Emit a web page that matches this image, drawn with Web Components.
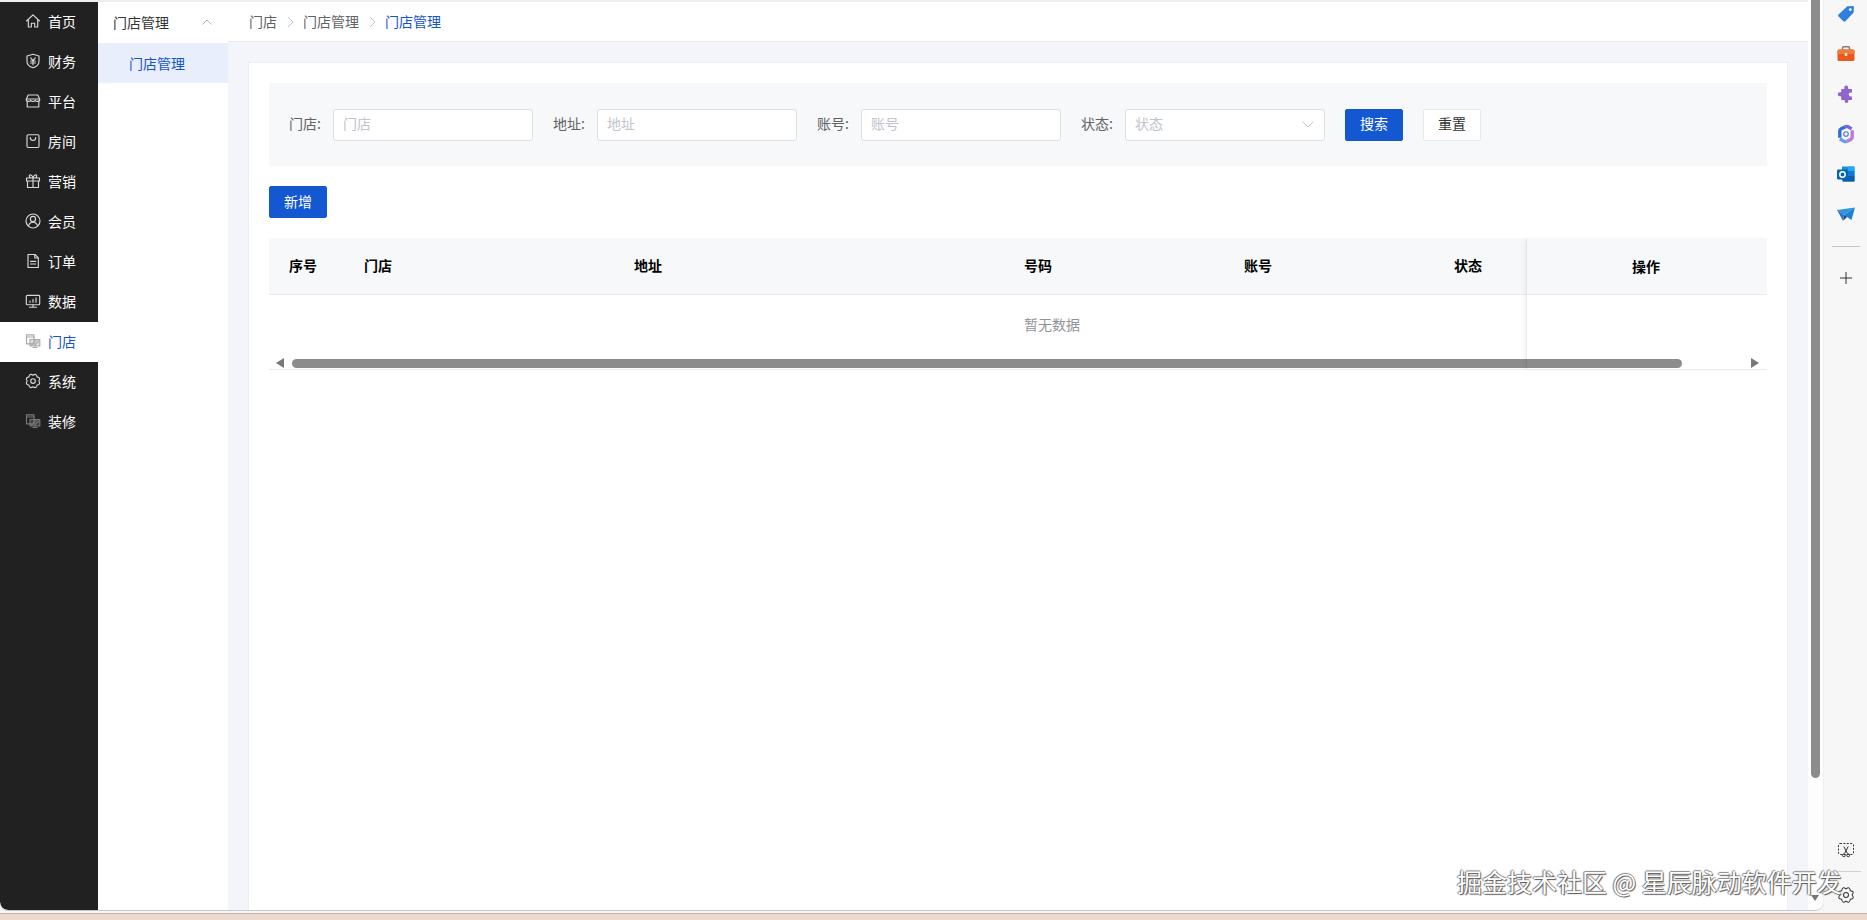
<!DOCTYPE html>
<html lang="zh-CN">
<head>
<meta charset="utf-8">
<title>门店管理</title>
<style>
  html, body { margin: 0; height: 920px; overflow: hidden; }
  body {
    background: #ecd9cc;
    font-family: "Noto Sans CJK SC", "Noto Sans", sans-serif;
    font-size: 14px;
  }
</style>
</head>
<body>
<browser-frame>
  <admin-app>
    <nav-rail slot="nav">
      <nav-item icon="home">首页</nav-item>
      <nav-item icon="shield">财务</nav-item>
      <nav-item icon="store">平台</nav-item>
      <nav-item icon="bag">房间</nav-item>
      <nav-item icon="gift">营销</nav-item>
      <nav-item icon="user">会员</nav-item>
      <nav-item icon="doc">订单</nav-item>
      <nav-item icon="chart">数据</nav-item>
      <nav-item icon="screens" active>门店</nav-item>
      <nav-item icon="gear">系统</nav-item>
      <nav-item icon="screens" dim>装修</nav-item>
    </nav-rail>
    <sub-menu slot="sub" heading="门店管理">
      <sub-item active>门店管理</sub-item>
    </sub-menu>
    <bread-crumb slot="crumb" items="门店,门店管理,门店管理"></bread-crumb>
    <page-card slot="page">
      <search-bar>
        <search-field label="门店" hint="门店"></search-field>
        <search-field label="地址" hint="地址"></search-field>
        <search-field label="账号" hint="账号"></search-field>
        <search-field label="状态" hint="状态" select></search-field>
        <ui-button primary>搜索</ui-button>
        <ui-button class="reset">重置</ui-button>
      </search-bar>
      <ui-button primary class="add">新增</ui-button>
      <data-table></data-table>
    </page-card>
  </admin-app>
  <ext-rail></ext-rail>
  <water-mark>掘金技术社区 @ 星辰脉动软件开发</water-mark>
</browser-frame>

<script>
// scalloped outline used by both gear icons
function gearPath(lobes, outer, inner) {
  let d = '';
  for (let i = 0; i < lobes; i++) {
    const a = (i / lobes) * Math.PI * 2;
    const b = ((i + 0.5) / lobes) * Math.PI * 2;
    const c = ((i + 1) / lobes) * Math.PI * 2;
    const pt = (ang, r) => `${(8 + Math.cos(ang) * r).toFixed(2)} ${(8 + Math.sin(ang) * r).toFixed(2)}`;
    if (i === 0) d += `M${pt(a, inner)}`;
    d += `Q${pt(b, outer * 1.18)} ${pt(c, inner)}`;
  }
  return d + 'z';
}

const ICONS = {
  home: '<path d="M1.500 8 8 1.800 14.500 8M3.300 6.600V14h3V10.200h3.400V14h3V6.600"/>',
  shield: '<path d="M8 1.300 14 3v5.200c0 3.400-2.600 5.500-6 6.500-3.400-1-6-3.100-6-6.500V3z"/><path d="M5.800 4.800 8 7.600l2.200-2.800M5.600 8h4.800M5.600 10h4.800M8 7.600V12" stroke-width="1.100"/>',
  store: '<path d="M3.200 2h9.600l2 4.500c0 1-1 1.900-2.300 1.900-1 0-1.900-.5-2.250-1.200C9.900 7.900 9 8.400 8 8.400s-1.900-.5-2.250-1.200C5.400 7.900 4.500 8.400 3.500 8.400c-1.300 0-2.300-.9-2.300-1.900z"/><path d="M2.200 8v6h11.600V8M2 6h12"/>',
  bag: '<rect x="2" y="1.700" width="12" height="12.800" rx="1.200"/><path d="M5.300 4.500c0 4 5.400 4 5.400 0"/>',
  gift: '<path d="M1.500 5h13v3h-13zM2.500 8v6.500h11V8M8 5v9.500M8 5C6.500 5 4.300 4.500 4.300 2.900 4.300 1.200 7.200 1.500 8 5c.8-3.500 3.700-3.800 3.700-2.100C11.700 4.500 9.500 5 8 5z"/>',
  user: '<circle cx="8" cy="8" r="7"/><circle cx="8" cy="6" r="2.600"/><path d="M3.500 13.200c.5-2.600 2.300-4 4.500-4s4 1.400 4.500 4"/>',
  doc: '<path d="M3 1.500h7l3.300 3.400v9.600H3z"/><path d="M9.800 1.500v3.500h3.500M5.500 8.300h5.200M5.500 11h5.200"/>',
  chart: '<rect x="1.300" y="2.300" width="13.400" height="9.400" rx="1"/><path d="M8 11.700v2.200M4.500 14.200h7M5 9.300V8M8 9.300V6.300M11 9.300V4.800"/>',
  screens: '<rect x="1.500" y="1.800" width="7.500" height="9" fill="none"/><path d="M1.500 4h7.500"/><rect x="5" y="6.500" width="9.800" height="6.500" fill="#888" fill-opacity=".25"/><path d="M6.500 12 11 7.500M9.500 12.500l4-4.500M8 14.500h4"/>',
  gear: `<path d="${gearPath(8, 7.4, 5.800)}"/><circle cx="8" cy="8" r="2.300"/>`
};

function svgIcon(name, size) {
  return `<svg width="${size}" height="${size}" viewBox="0 0 16 16" fill="none" stroke="currentColor" stroke-width="1.150" stroke-linejoin="round" stroke-linecap="round">${ICONS[name]}</svg>`;
}

class BrowserFrame extends HTMLElement {
  constructor() {
    super();
    this.attachShadow({ mode: 'open' });
    this.shadowRoot.innerHTML = `
      <style>
        :host { display: flex; position: relative; height: 914px; background: #f7f7f7; border-bottom: 1px solid #bdb6b1; box-sizing: border-box; }
      </style>
      <slot></slot>`;
  }
}

class AdminApp extends HTMLElement {
  constructor() {
    super();
    this.attachShadow({ mode: 'open' });
    this.shadowRoot.innerHTML = `
      <style>
        :host { display: flex; width: 1823px; height: 910px; flex: none; background: #fff; border-radius: 0 0 8px 8px; overflow: hidden; box-shadow: 0 1px 0 #c8c8c8; }
        .left { flex: 1; min-width: 0; display: flex; padding-top: 2px; background: #eeeeee; }
        .main { flex: 1; min-width: 0; display: flex; flex-direction: column; background: #f3f5fa; }
        .vscroll { width: 15px; flex: none; background: #fdfdfd; padding-left: 3px; box-sizing: border-box; position: relative; }
        .thumb { width: 9px; height: 778px; background: #8c8c8c; border-radius: 0 0 5px 5px; }
        .down { position: absolute; left: 3px; bottom: 9px; width: 0; height: 0; border-left: 4.500px solid transparent; border-right: 4.500px solid transparent; border-top: 6px solid #777; }
      </style>
      <div class="left">
        <slot name="nav"></slot>
        <slot name="sub"></slot>
        <div class="main">
          <slot name="crumb"></slot>
          <slot name="page"></slot>
        </div>
      </div>
      <div class="vscroll"><div class="thumb"></div><div class="down"></div></div>`;
  }
}

class NavRail extends HTMLElement {
  constructor() {
    super();
    this.attachShadow({ mode: 'open' });
    this.shadowRoot.innerHTML = `
      <style>
        :host { display: block; width: 98px; flex: none; background: #212121; border-radius: 0 0 0 8px; }
      </style>
      <slot></slot>`;
  }
}

class NavItem extends HTMLElement {
  constructor() {
    super();
    this.attachShadow({ mode: 'open' });
  }

  connectedCallback() {
    this.shadowRoot.innerHTML = `
      <style>
        :host { display: flex; align-items: center; gap: 7px; height: 40px; padding: 0 0 2px 25px; box-sizing: border-box; color: #fff; font-size: 14px; }
        :host([active]) { background: #fff; color: #1456c8; }
        svg { display: block; color: #d8d8d8; }
        :host([active]) svg { color: #a9a9a9; }
        :host([dim]) svg { color: #7a7a7a; }
      </style>
      ${svgIcon(this.getAttribute('icon'), 16)}
      <slot></slot>`;
  }
}

class SubMenu extends HTMLElement {
  constructor() {
    super();
    this.attachShadow({ mode: 'open' });
  }

  connectedCallback() {
    this.shadowRoot.innerHTML = `
      <style>
        :host { display: block; width: 130px; flex: none; background: #fff; color: #333; }
        .title { display: flex; align-items: center; justify-content: space-between; height: 41px; padding: 0 15px 2px; box-sizing: border-box; }
        svg { display: block; margin-right: 1px; }
      </style>
      <div class="title">
        <span>${this.getAttribute('heading')}</span>
        <svg width="10" height="6" viewBox="0 0 10 6" fill="none" stroke="#b5b5b5" stroke-width="1"><path d="M.5 5.500 5 1l4.500 4.500"/></svg>
      </div>
      <slot></slot>`;
  }
}

class SubItem extends HTMLElement {
  constructor() {
    super();
    this.attachShadow({ mode: 'open' });
    this.shadowRoot.innerHTML = `
      <style>
        :host { display: flex; align-items: center; height: 40px; padding-left: 31px; }
        :host([active]) { background: #e8eefb; color: #1456c8; }
      </style>
      <slot></slot>`;
  }
}

class BreadCrumb extends HTMLElement {
  constructor() {
    super();
    this.attachShadow({ mode: 'open' });
  }

  connectedCallback() {
    const items = this.getAttribute('items').split(',');
    const chevron = '<svg class="sep" width="7" height="12" viewBox="0 0 7 12" fill="none" stroke="#c0c4cc" stroke-width="1"><path d="M1 1l5 5-5 5"/></svg>';
    this.shadowRoot.innerHTML = `
      <style>
        :host { display: flex; align-items: center; height: 40px; padding: 0 0 2px 21px; background: #fff; border-bottom: 1px solid #e8eaef; box-sizing: border-box; color: #606266; flex: none; }
        .sep { margin: 2px 9.500px 0; display: block; }
        span:last-child { color: #1456c8; }
      </style>
      ${items.map(t => `<span>${t}</span>`).join(chevron)}`;
  }
}

class PageCard extends HTMLElement {
  constructor() {
    super();
    this.attachShadow({ mode: 'open' });
    this.shadowRoot.innerHTML = `
      <style>
        :host { display: flex; flex-direction: column; flex: 1; margin: 20px 20px 0; padding: 20px 20px 0; background: #fff; border: 1px solid #eceef3; border-bottom: 0; box-sizing: border-box; }
        ::slotted(.add) { align-self: flex-start; margin: 20px 0; }
      </style>
      <slot></slot>`;
  }
}

class SearchBar extends HTMLElement {
  constructor() {
    super();
    this.attachShadow({ mode: 'open' });
    this.shadowRoot.innerHTML = `
      <style>
        :host { display: flex; align-items: center; gap: 21px; height: 83px; padding-left: 20px; background: #f7f8fa; }
        ::slotted(.reset) { margin-left: -1px; }
      </style>
      <slot></slot>`;
  }
}

class SearchField extends HTMLElement {
  constructor() {
    super();
    this.attachShadow({ mode: 'open' });
  }

  connectedCallback() {
    const arrow = this.hasAttribute('select')
      ? '<svg width="12" height="7" viewBox="0 0 12 7" fill="none" stroke="#c0c4cc" stroke-width="1"><path d="M.8.8 6 6l5.200-5.200"/></svg>'
      : '';
    this.shadowRoot.innerHTML = `
      <style>
        :host { display: flex; align-items: center; margin-right: -1px; }
        label { width: 33px; margin-right: 11px; color: #606266; white-space: nowrap; padding-bottom: 4px; }
        .box { display: flex; align-items: center; justify-content: space-between; width: 200px; height: 32px; padding: 0 10px 0 9px; box-sizing: border-box; background: #fff; border: 1px solid #dcdfe6; border-radius: 3px; color: #c0c4cc; font-size: 14px; }
        .box span { padding-bottom: 4px; }
      </style>
      <label>${this.getAttribute('label')}:</label>
      <div class="box"><span>${this.getAttribute('hint')}</span>${arrow}</div>`;
  }
}

class UiButton extends HTMLElement {
  constructor() {
    super();
    this.attachShadow({ mode: 'open' });
    this.shadowRoot.innerHTML = `
      <style>
        :host { display: flex; align-items: center; justify-content: center; width: 58px; height: 32px; padding-bottom: 3px; box-sizing: border-box; background: #fff; border: 1px solid #e4e7ed; border-radius: 2px; color: #333; font-size: 14px; }
        :host([primary]) { background: #1358d0; border-color: #1358d0; color: #fff; }
      </style>
      <slot></slot>`;
  }
}

class DataTable extends HTMLElement {
  constructor() {
    super();
    this.attachShadow({ mode: 'open' });
    const cols = [['序号', 75], ['门店', 270], ['地址', 390], ['号码', 220], ['账号', 210], ['状态', 73]];
    this.shadowRoot.innerHTML = `
      <style>
        :host { display: block; position: relative; height: 132px; border-bottom: 1px solid #e9ebf0; box-sizing: border-box; }
        .head { display: flex; height: 57px; padding-bottom: 2px; background: #f7f8fa; border-bottom: 1px solid #e9ebf0; box-sizing: border-box; color: #000; font-weight: 700; }
        .head div { display: flex; align-items: center; padding-left: 20px; box-sizing: border-box; flex: none; }
        .empty { height: 63px; line-height: 58px; padding-left: 755px; color: #909399; font-size: 14px; box-sizing: border-box; }
        .scroll { display: flex; align-items: center; height: 10px; }
        .left { width: 0; height: 0; margin-left: 7px; border-top: 5px solid transparent; border-bottom: 5px solid transparent; border-right: 8px solid #777; }
        .thumb { width: 1390px; height: 9px; margin-left: 8px; background: #8c8c8c; border-radius: 5px; }
        .right { width: 0; height: 0; margin-left: auto; margin-right: 8px; border-top: 5px solid transparent; border-bottom: 5px solid transparent; border-left: 8px solid #777; }
        .fixed { position: absolute; left: 1257px; top: 0; bottom: 0; width: 241px; padding-right: 2px; box-sizing: border-box; border-left: 1px solid rgba(0,0,0,.07); box-shadow: -3px 0 5px -2px rgba(0,0,0,.06); }
        .fixed div { display: flex; align-items: center; justify-content: center; height: 55px; color: #000; font-weight: 700; }
      </style>
      <div class="head">${cols.map(([t, w]) => `<div style="width:${w}px">${t}</div>`).join('')}</div>
      <div class="empty">暂无数据</div>
      <div class="scroll"><div class="left"></div><div class="thumb"></div><div class="right"></div></div>
      <div class="fixed"><div>操作</div></div>`;
  }
}

class ExtRail extends HTMLElement {
  constructor() {
    super();
    this.attachShadow({ mode: 'open' });
    this.shadowRoot.innerHTML = `
      <style>
        :host { display: flex; flex-direction: column; align-items: center; flex: 1; position: relative; height: 913px; border-left: 1px solid #efefef; box-sizing: border-box; overflow: hidden; }
        .app { display: flex; align-items: center; justify-content: center; height: 40px; flex: none; }
        .app:first-of-type { margin-top: -6px; }
        svg { display: block; flex: none; }
        hr { width: 28px; height: 1px; margin: 12px 0 0; border: 0; background: #c9c9c9; flex: none; }
        .plus { margin-top: 24px; }
        .spacer { flex: 1; }
        .cut { margin-bottom: 13px; }
        .line { width: 30px; height: 1px; background: #d2d2d2; margin-bottom: 14px; flex: none; }
        .gear { margin-bottom: 9px; margin-left: 1px; }
      </style>
      <div class="app"><svg width="20" height="20" viewBox="0 0 20 20"><path d="M2.500 10.500 10.800 2.700c.4-.4.800-.5 1.300-.5l4.600-.3c.7 0 1.200.5 1.200 1.200l-.2 4.700c0 .5-.2.900-.5 1.200L9.400 17.300c-.6.600-1.500.6-2 0l-4.900-4.900c-.5-.5-.5-1.400 0-1.900z" fill="#2f7fdf"/><circle cx="14.300" cy="5.600" r="1.400" fill="#fff"/></svg></div>
      <div class="app"><svg width="20" height="20" viewBox="0 0 20 20"><path d="M6.500 6V3.800c0-.6.400-1 1-1h5c.6 0 1 .4 1 1V6" fill="none" stroke="#8a7a72" stroke-width="1.500"/><rect x="1.500" y="5.500" width="17" height="11.500" rx="1.500" fill="#e9581f"/><rect x="1.500" y="5.500" width="17" height="4.500" rx="1.500" fill="#f07a3a"/><rect x="8.700" y="9" width="2.600" height="3" rx=".6" fill="#fde6d5"/></svg></div>
      <div class="app"><svg width="20" height="20" viewBox="0 0 20 20"><path d="M8.300 5V3.300a1.900 1.900 0 0 1 3.800 0V5h3.100c.5 0 .8.300.8.800v2.600h-1.300a2 2 0 0 0 0 4H16v2.800c0 .5-.3.800-.8.800h-2.900v1.200a1.800 1.800 0 0 1-3.600 0V16H6c-.5 0-.8-.3-.8-.8v-2.900H3.700a2 2 0 0 1 0-4h1.500V5.800c0-.5.300-.8.800-.8z" fill="#9163cc"/></svg></div>
      <div class="app"><svg width="20" height="20" viewBox="0 0 20 20" fill="none" stroke-width="3.400"><path d="M3.800 13.800V6.800c0-1 .5-1.700 1.400-2.100L9.500 2.700" stroke="#2f6fd6"/><path d="M9.500 2.700c1-.4 2-.3 2.800.2l3.300 2" stroke="#7a63d6"/><path d="M16.200 6.200v7c0 1-.5 1.700-1.300 2.200l-4.200 2" stroke="#b77be0"/><path d="M10.700 17.400c-1 .4-1.900.3-2.800-.2l-4-2.400" stroke="#6a9cee"/><circle cx="10" cy="10" r="2.300" stroke="#4f77d8" stroke-width="1.100"/></svg></div>
      <div class="app"><svg width="20" height="20" viewBox="0 0 20 20"><path d="M6 2.500h11.500c.5 0 1 .5 1 1v13c0 .5-.5 1-1 1H7c-.5 0-1-.5-1-1z" fill="#1490df"/><path d="M12 2.500h6.500V7H12z" fill="#28a8ea"/><path d="M12 7h6.500v5H12z" fill="#0f78d4"/><path d="M7 12h11.500v5.500H7z" fill="#0a5ea8"/><rect x="1" y="5.500" width="11" height="10" rx="1.200" fill="#0364b8"/><circle cx="6.500" cy="10.500" r="2.700" fill="none" stroke="#fff" stroke-width="1.500"/></svg></div>
      <div class="app"><svg width="20" height="20" viewBox="0 0 20 20"><path d="M1 6 19 3.500 8 11z" fill="#2f95e0"/><path d="M19 3.500 15.500 16 8 11z" fill="#1f7fd0"/><path d="M8 11l-.8 5.800L11 13z" fill="#1d3f7c"/><path d="M1 6l7 5-1 5.800z" fill="#2d6fc0"/></svg></div>
      <hr>
      <svg class="plus" width="14" height="14" viewBox="0 0 14 14" stroke="#333" stroke-width="1"><path d="M7 1v12M1 7h12"/></svg>
      <div class="spacer"></div>
      <svg class="cut" width="16" height="16" viewBox="0 0 16 16" fill="none" stroke="#333" stroke-width="1"><rect x=".5" y="1.500" width="15" height="11" rx="1.500" stroke-dasharray="2 1.400"/><path d="M5.800 4.500 9.400 11.500M10.200 4.500 6.600 11.500"/><circle cx="5.800" cy="13.300" r="1.400"/><circle cx="10.200" cy="13.300" r="1.400"/></svg>
      <div class="line"></div>
      <svg class="gear" width="18" height="18" viewBox="0 0 16 16" fill="none" stroke="#333" stroke-width=".9"><path d="${gearPath(8, 7.400, 5.400)}"/><circle cx="8" cy="8" r="2.200"/></svg>`;
  }
}

class WaterMark extends HTMLElement {
  constructor() {
    super();
    this.attachShadow({ mode: 'open' });
    this.shadowRoot.innerHTML = `
      <style>
        :host { position: absolute; left: 1457px; top: 864px; font-size: 25px; line-height: 35px; white-space: nowrap; color: #fff; letter-spacing: 0;
          text-shadow: 1px 1px 1px #555, -1px 0 1px #777, 0 -1px 1px #888; }
      </style>
      <slot></slot>`;
  }
}

customElements.define('browser-frame', BrowserFrame);
customElements.define('admin-app', AdminApp);
customElements.define('nav-rail', NavRail);
customElements.define('nav-item', NavItem);
customElements.define('sub-menu', SubMenu);
customElements.define('sub-item', SubItem);
customElements.define('bread-crumb', BreadCrumb);
customElements.define('page-card', PageCard);
customElements.define('search-bar', SearchBar);
customElements.define('search-field', SearchField);
customElements.define('ui-button', UiButton);
customElements.define('data-table', DataTable);
customElements.define('ext-rail', ExtRail);
customElements.define('water-mark', WaterMark);
</script>
</body>
</html>
